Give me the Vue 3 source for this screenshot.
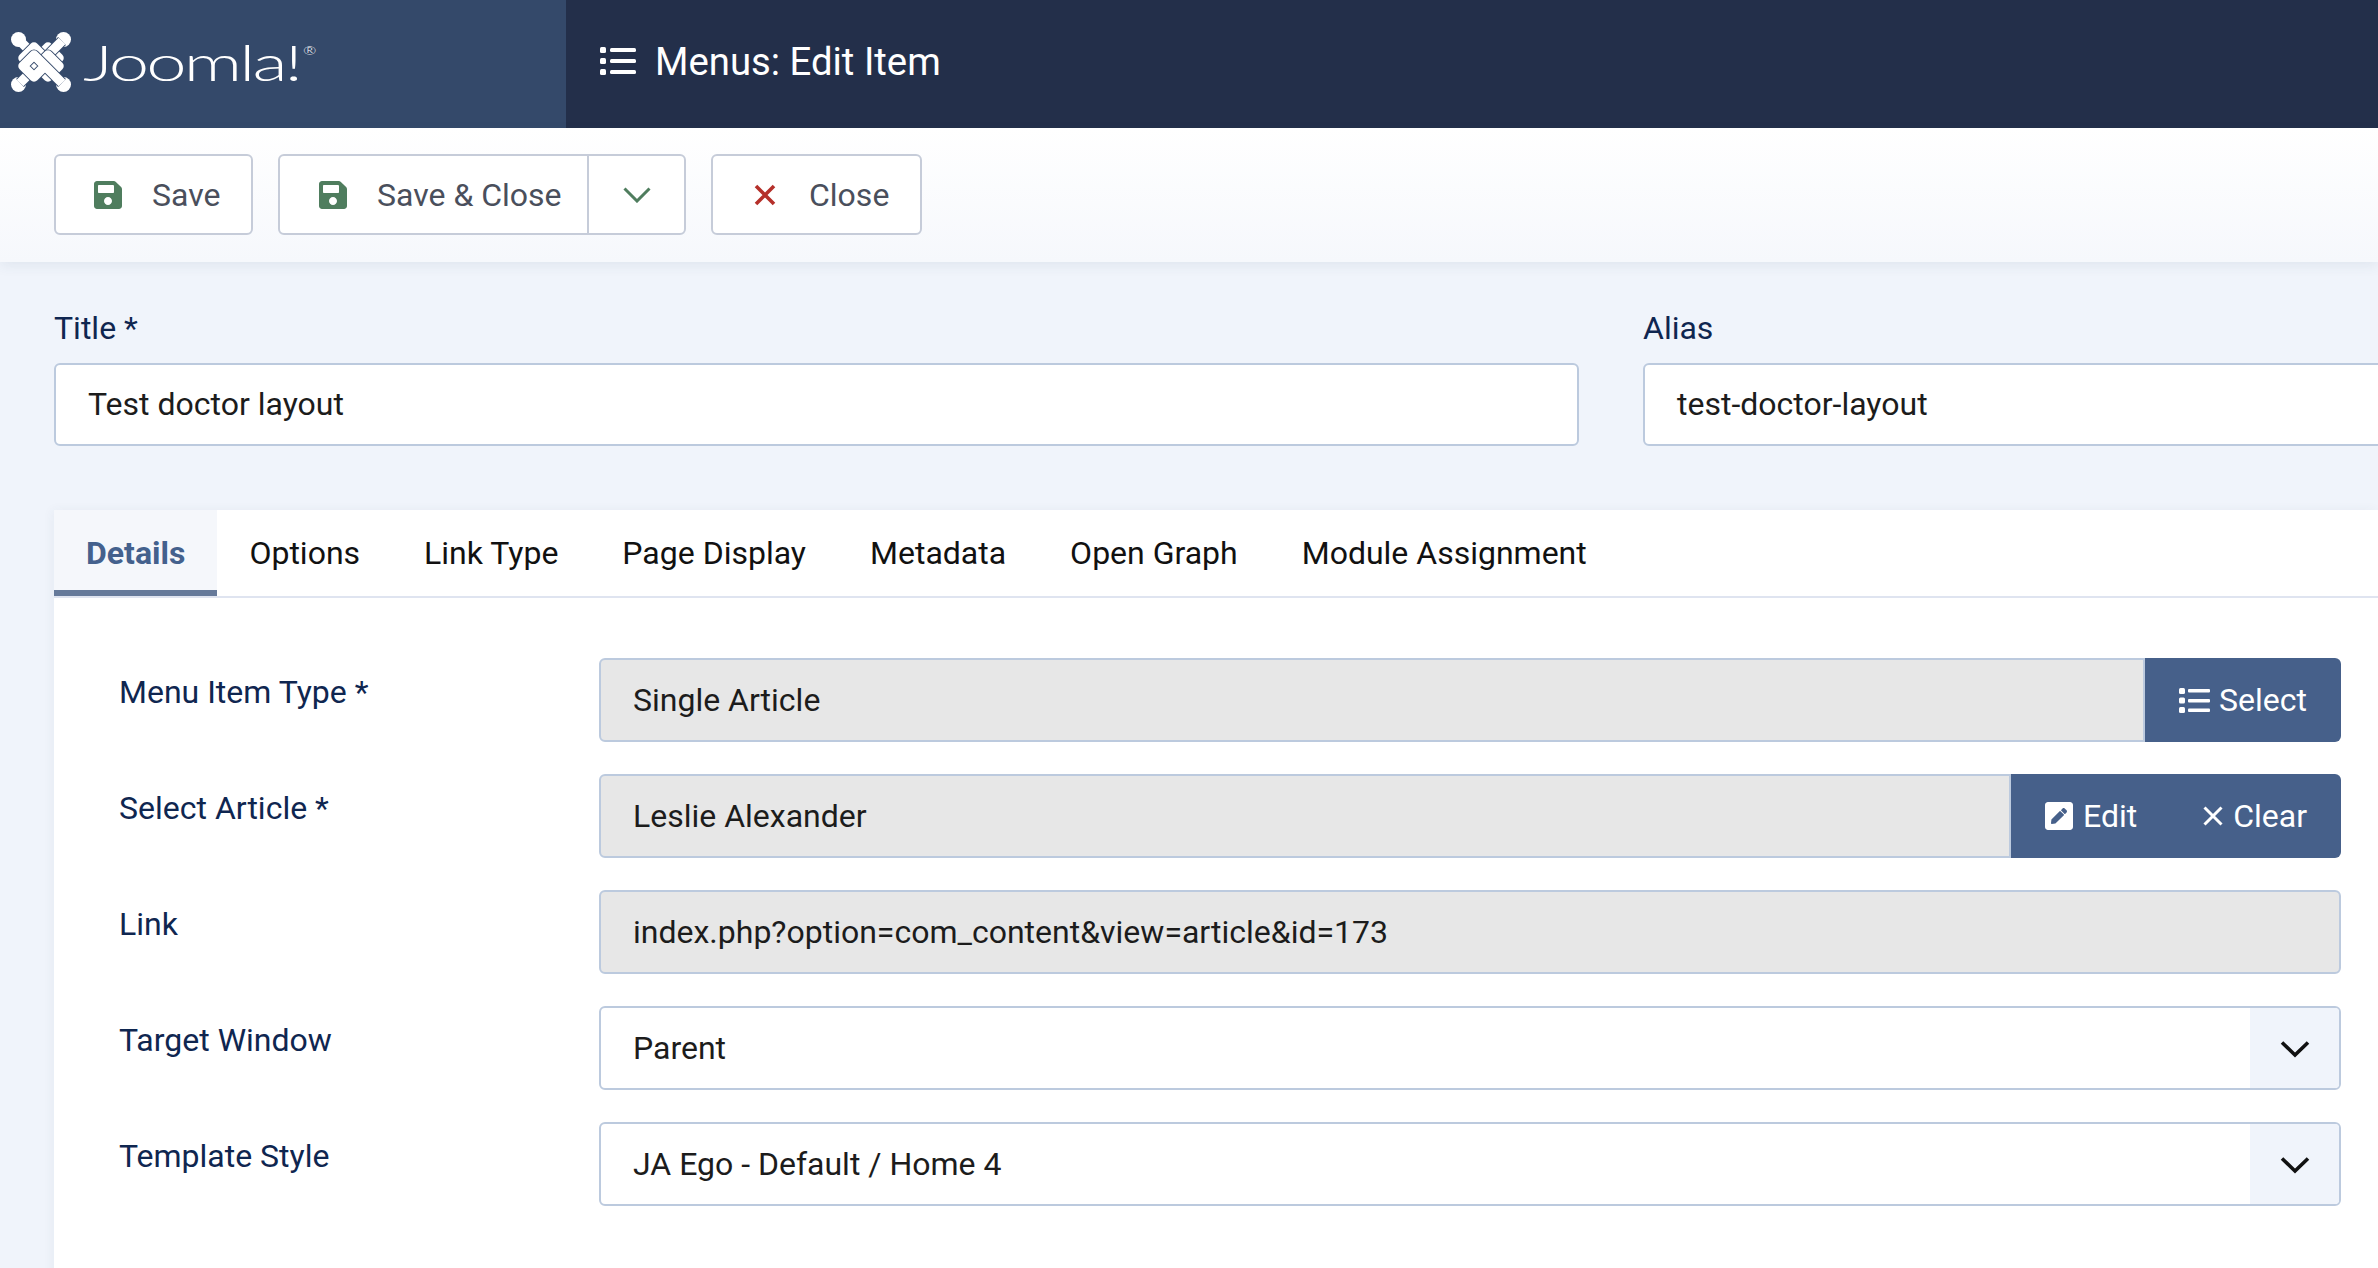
<script setup>
const tabs = ['Details', 'Options', 'Link Type', 'Page Display', 'Metadata', 'Open Graph', 'Module Assignment']
</script>

<template>
  <div class="page">
    <header class="topbar">
      <div class="brand">
        <svg class="mark" viewBox="0 0 60 60">
          <g fill="#fff">
            <circle cx="7.5" cy="7.5" r="7.5" /><circle cx="52.5" cy="7.5" r="7.5" />
            <circle cx="7.5" cy="52.5" r="7.5" /><circle cx="52.5" cy="52.5" r="7.5" />
          </g>
          <g fill="none" stroke-linecap="butt" stroke-linejoin="round">
            <path d="M9 9 L37 37 L48 26 L37 15 L29 23" stroke="#fff" stroke-width="9.5" />
            <path d="M51 9 L23 37 L12 26 L23 15 L31 23" stroke="#34496a" stroke-width="11" />
            <path d="M51 9 L23 37 L12 26 L23 15 L31 23" stroke="#fff" stroke-width="9.5" />
            <path d="M9 51 L37 23 L48 34 L37 45 L29 37" stroke="#34496a" stroke-width="11" />
            <path d="M9 51 L37 23 L48 34 L37 45 L29 37" stroke="#fff" stroke-width="9.5" />
            <path d="M51 51 L23 23 L12 34 L23 45 L31 37" stroke="#34496a" stroke-width="11" />
            <path d="M51 51 L23 23 L12 34 L23 45 L31 37" stroke="#fff" stroke-width="9.5" />
          </g>
        </svg>
        <span class="wordmark">Joomla!<sup class="reg">®</sup></span>
      </div>
      <div class="page-title">
        <svg class="title-icon" viewBox="0 0 36 28"><g fill="#fff"><rect x="0" y="0" width="6" height="6" rx="1.5" /><rect x="0" y="11" width="6" height="6" rx="1.5" /><rect x="0" y="22" width="6" height="6" rx="1.5" /><rect x="10" y="1" width="26" height="4" rx="1.5" /><rect x="10" y="12" width="26" height="4" rx="1.5" /><rect x="10" y="23" width="26" height="4" rx="1.5" /></g></svg>
        <span>Menus: Edit Item</span>
      </div>
    </header>

    <div class="toolbar">
      <button class="tool save-btn">
        <svg class="floppy" viewBox="0 0 448 512"><path d="M433.941 129.941l-83.882-83.882A48 48 0 0 0 316.118 32H48C21.49 32 0 53.49 0 80v352c0 26.51 21.49 48 48 48h352c26.51 0 48-21.49 48-48V163.882a48 48 0 0 0-14.059-33.941zM224 416c-35.346 0-64-28.654-64-64 0-35.346 28.654-64 64-64s64 28.654 64 64c0 35.346-28.654 64-64 64zm96-304.52V212c0 6.627-5.373 12-12 12H76c-6.627 0-12-5.373-12-12V108c0-6.627 5.373-12 12-12h228.52c3.183 0 6.235 1.264 8.485 3.515l3.48 3.48A11.996 11.996 0 0 1 320 111.48z" /></svg>
        <span>Save</span>
      </button>
      <div class="tool split">
        <button class="split-main">
          <svg class="floppy" viewBox="0 0 448 512"><path d="M433.941 129.941l-83.882-83.882A48 48 0 0 0 316.118 32H48C21.49 32 0 53.49 0 80v352c0 26.51 21.49 48 48 48h352c26.51 0 48-21.49 48-48V163.882a48 48 0 0 0-14.059-33.941zM224 416c-35.346 0-64-28.654-64-64 0-35.346 28.654-64 64-64s64 28.654 64 64c0 35.346-28.654 64-64 64zm96-304.52V212c0 6.627-5.373 12-12 12H76c-6.627 0-12-5.373-12-12V108c0-6.627 5.373-12 12-12h228.52c3.183 0 6.235 1.264 8.485 3.515l3.48 3.48A11.996 11.996 0 0 1 320 111.48z" /></svg>
          <span>Save &amp; Close</span>
        </button>
        <button class="split-caret">
          <svg viewBox="0 0 28 16" class="caret"><path d="M1.5 1.5 L14 14 L26.5 1.5" fill="none" stroke="#4f7d5e" stroke-width="3" /></svg>
        </button>
      </div>
      <button class="tool close-btn">
        <svg class="cross" viewBox="0 0 22 22"><path d="M2 2 L20 20 M20 2 L2 20" fill="none" stroke="#b5302a" stroke-width="3.6" /></svg>
        <span>Close</span>
      </button>
    </div>

    <main class="content">
      <div class="title-row">
        <div class="title-col">
          <label class="field-label">Title *</label>
          <div class="input">Test doctor layout</div>
        </div>
        <div class="alias-col">
          <label class="field-label">Alias</label>
          <div class="input alias">test-doctor-layout</div>
        </div>
      </div>

      <section class="card">
        <nav class="tabs">
          <a v-for="(tab, i) in tabs" :key="tab" class="tab" :class="{ active: i === 0 }">{{ tab }}</a>
        </nav>
        <div class="form">
          <div class="row">
            <label class="row-label">Menu Item Type *</label>
            <div class="group">
              <div class="input ro joined">Single Article</div>
              <div class="addon">
                <span class="addon-btn select">
                  <svg class="list-icon" viewBox="0 0 31 25"><g fill="#fff"><rect x="0" y="0" width="6" height="6" rx="1.5" /><rect x="0" y="9.5" width="6" height="6" rx="1.5" /><rect x="0" y="19" width="6" height="6" rx="1.5" /><rect x="9" y="1" width="22" height="3.4" rx="1" /><rect x="9" y="11" width="22" height="3.4" rx="1" /><rect x="9" y="20.5" width="22" height="3.4" rx="1" /></g></svg>
                  Select
                </span>
              </div>
            </div>
          </div>
          <div class="row">
            <label class="row-label">Select Article *</label>
            <div class="group">
              <div class="input ro joined">Leslie Alexander</div>
              <div class="addon">
                <span class="addon-btn edit">
                  <svg class="edit-icon" viewBox="0 32 448 448"><path fill="#fff" d="M400 480H48c-26.5 0-48-21.5-48-48V80c0-26.5 21.5-48 48-48h352c26.5 0 48 21.5 48 48v352c0 26.5-21.5 48-48 48zM238.1 177.9L102.4 313.6l-6.3 57.1c-.8 7.6 5.6 14.1 13.3 13.3l57.1-6.3L302.2 242c2.3-2.3 2.3-6.1 0-8.5L246.7 178c-2.5-2.4-6.3-2.4-8.6-.1zM345 165.1L314.9 135c-9.4-9.4-24.6-9.4-33.9 0l-23.1 23.1c-2.3 2.3-2.3 6.1 0 8.5l55.5 55.5c2.3 2.3 6.1 2.3 8.5 0L345 199c9.3-9.3 9.3-24.5 0-33.9z" /></svg>
                  Edit
                </span>
                <span class="addon-btn clear">
                  <svg class="x-icon" viewBox="0 0 20 20"><path d="M1.5 1.5 L18.5 18.5 M18.5 1.5 L1.5 18.5" fill="none" stroke="#fff" stroke-width="3" /></svg>
                  Clear
                </span>
              </div>
            </div>
          </div>
          <div class="row">
            <label class="row-label">Link</label>
            <div class="group"><div class="input ro">index.php?option=com_content&amp;view=article&amp;id=173</div></div>
          </div>
          <div class="row">
            <label class="row-label">Target Window</label>
            <div class="group">
              <div class="input sel">
                <span>Parent</span>
                <span class="sel-arrow"><svg viewBox="0 0 30 18" class="chev"><path d="M2 2.5 L15 15 L28 2.5" fill="none" stroke="#111" stroke-width="3.6" /></svg></span>
              </div>
            </div>
          </div>
          <div class="row">
            <label class="row-label">Template Style</label>
            <div class="group">
              <div class="input sel">
                <span>JA Ego - Default / Home 4</span>
                <span class="sel-arrow"><svg viewBox="0 0 30 18" class="chev"><path d="M2 2.5 L15 15 L28 2.5" fill="none" stroke="#111" stroke-width="3.6" /></svg></span>
              </div>
            </div>
          </div>
        </div>
      </section>
    </main>
  </div>
</template>

<style>
html, body { margin: 0; background: #f0f4fb; }
</style>

<style scoped>
* { box-sizing: border-box; }
.page {
  width: 2378px;
  height: 1268px;
  overflow: hidden;
  background: #f0f4fb;
  font-family: Roboto, "Liberation Sans", sans-serif;
  font-size: 32px;
  color: #1c1c1c;
}
.topbar { display: flex; height: 128px; background: #232f4a; }
.brand {
  width: 566px;
  background: #34496a;
  display: flex;
  align-items: flex-start;
  padding: 32px 0 0 11px;
  color: #fff;
}
.mark { width: 60px; height: 60px; flex: none; }
.wordmark {
  font-family: Lato, sans-serif;
  font-weight: 300;
  font-size: 50px;
  line-height: 60px;
  letter-spacing: -2px;
  margin-left: 12px;
  display: inline-block;
  white-space: nowrap;
  transform-origin: left center;
  transform: scaleX(1.45);
}
.reg { font-size: 11px; line-height: 0; vertical-align: 26px; letter-spacing: 0; margin-left: 2px; }
.page-title {
  display: flex;
  align-items: center;
  padding: 0 0 6px 34px;
  color: #fff;
  font-size: 38.3px;
  gap: 19px;
}
.title-icon { width: 36px; height: 28px; }
.toolbar {
  display: flex;
  gap: 25px;
  height: 134px;
  padding: 26px 54px;
  background: linear-gradient(#fff, #f6f8fc);
  box-shadow: 0 4px 12px rgba(52, 73, 106, 0.08);
  position: relative;
}
.tool {
  height: 81px;
  border: 2px solid #c6ccd9;
  border-radius: 6px;
  background: #fff;
  font: inherit;
  color: #4a4f5c;
  display: flex;
  align-items: center;
  padding: 0;
}
.save-btn { width: 199px; padding-left: 38px; gap: 30px; }
.close-btn { width: 211px; padding-left: 41px; gap: 33px; }
.split { width: 408px; }
.split-main {
  width: 309px;
  height: 100%;
  border: 0;
  border-right: 2px solid #c6ccd9;
  background: none;
  font: inherit;
  color: inherit;
  display: flex;
  align-items: center;
  gap: 30px;
  padding: 0 0 0 39px;
}
.split-caret {
  flex: 1;
  height: 100%;
  border: 0;
  background: none;
  padding: 0;
  display: flex;
  align-items: center;
  justify-content: center;
}
.floppy { width: 28px; height: 32px; fill: #4f7d5e; flex: none; }
.caret { width: 28px; height: 16px; }
.cross { width: 22px; height: 22px; flex: none; }
.content { padding: 39px 0 0 54px; }
.title-row { display: flex; gap: 64px; }
.title-col { width: 1525px; flex: none; }
.alias-col { width: 1000px; flex: none; }
.field-label {
  display: block;
  color: #0f2650;
  height: 46px;
  line-height: 46px;
  margin-top: 4px;
  white-space: nowrap;
}
.input {
  height: 83px;
  border: 2px solid #bccade;
  border-radius: 6px;
  background: #fff;
  padding: 0 32px;
  display: flex;
  align-items: center;
  color: #1c1c1c;
  white-space: nowrap;
}
.title-col .input, .alias-col .input { margin-top: 12px; padding-bottom: 2px; }
.card {
  margin-top: 64px;
  background: #fff;
  box-shadow: -2px 0 10px rgba(52, 73, 106, 0.05);
  height: 800px;
}
.tabs {
  display: flex;
  height: 88px;
  border-bottom: 2px solid #dfe4f0;
}
.tab {
  padding: 0 32px;
  display: flex;
  align-items: center;
  height: 86px;
  color: #111;
  white-space: nowrap;
}
.tab.active {
  background: #f5f7fb;
  color: #44618d;
  font-weight: 700;
  border-bottom: 6px solid #667a9a;
  padding-top: 6px;
}
.form { padding: 60px 37px 0 65px; }
.row {
  display: flex;
  height: 84px;
  margin-bottom: 32px;
}
.row-label {
  width: 480px;
  flex: none;
  color: #0f2650;
  line-height: 68px;
  white-space: nowrap;
}
.group { flex: 1; display: flex; min-width: 0; }
.group > .input { flex: 1; height: 84px; min-width: 0; }
.ro { background: #e7e7e7; }
.joined { border-radius: 6px 0 0 6px; }
.addon {
  display: flex;
  background: #46608a;
  border-radius: 0 6px 6px 0;
  color: #fff;
  align-items: center;
  height: 84px;
}
.addon-btn { display: flex; align-items: center; white-space: nowrap; }
.addon-btn.select { padding: 0 34px 0 34px; gap: 9px; }
.addon-btn.edit { padding: 0 33px 0 34px; gap: 10px; }
.addon-btn.clear { padding: 0 34px 0 33px; gap: 10px; }
.list-icon { width: 31px; height: 25px; }
.edit-icon { width: 28px; height: 28px; }
.x-icon { width: 20px; height: 20px; }
.sel { padding-right: 0; justify-content: space-between; overflow: hidden; }
.sel-arrow {
  width: 89px;
  height: 100%;
  background: #f0f4fb;
  display: flex;
  align-items: center;
  justify-content: center;
  padding-top: 2px;
}
.chev { width: 30px; height: 18px; }
</style>
